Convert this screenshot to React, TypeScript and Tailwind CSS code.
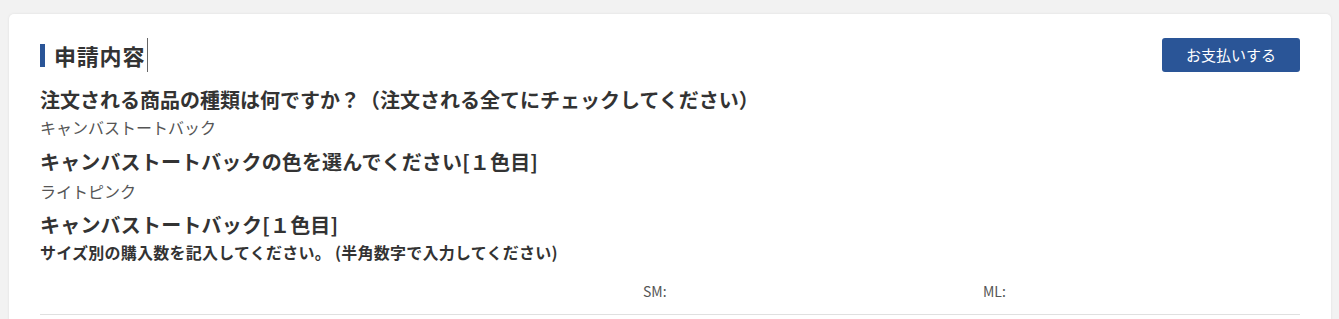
import React from "react";

export default function App() {
  const font = { fontFamily: '"Noto Sans CJK JP", "Noto Sans", sans-serif' };
  return (
    <div className="w-[1339px] h-[319px] bg-[#f2f2f2] overflow-hidden pt-[14px] pl-[9px] pr-[8px]" style={font}>
      <div className="bg-white rounded-[5px] shadow-[0_0_3px_rgba(0,0,0,0.08)] h-[320px] pl-[31px] pr-[31px] pt-[24px]">
        <div className="flex items-center justify-between h-[34px]">
          <div className="flex items-center h-[34px]">
            <div className="w-[5px] h-[23px] bg-[#2a5597] mr-[9px]" />
            <span className="text-[22px] tracking-[0.8px] leading-[34px] font-bold text-[#333]">申請内容</span>
            <span className="w-px h-[34px] bg-[#666] ml-[2px]" />
          </div>
          <button className="w-[138px] h-[34px] rounded-[3px] bg-[#2a5597] text-white text-[15px] leading-[34px]">
            お支払いする
          </button>
        </div>
        <div className="mt-[16px] text-[20px] leading-[24px] font-bold text-[#333]">
          注文される商品の種類は何ですか？（注文される全てにチェックしてください）
        </div>
        <div className="mt-[3px] text-[16px] leading-[24px] text-[#555]">キャンバストートバック</div>
        <div className="mt-[11px] text-[20px] tracking-[0.15px] leading-[24px] font-bold text-[#333]">
          キャンバストートバックの色を選んでください[１色目]
        </div>
        <div className="mt-[5px] text-[16px] leading-[24px] text-[#555]">ライトピンク</div>
        <div className="mt-[10px] text-[20px] tracking-[0.2px] leading-[24px] font-bold text-[#333]">
          キャンバストートバック[１色目]
        </div>
        <div className="mt-[4px] text-[16px] tracking-[0.25px] leading-[22px] font-bold text-[#333]">
          サイズ別の購入数を記入してください。 (半角数字で入力してください)
        </div>
        <div className="mt-[18px] flex text-[14px] leading-[20px] text-[#555]">
          <div className="w-[603px]" />
          <div className="w-[340px]">SM:</div>
          <div>ML:</div>
        </div>
        <div className="mt-[13px] border-t border-[#e0e0e0]" />
      </div>
    </div>
  );
}
